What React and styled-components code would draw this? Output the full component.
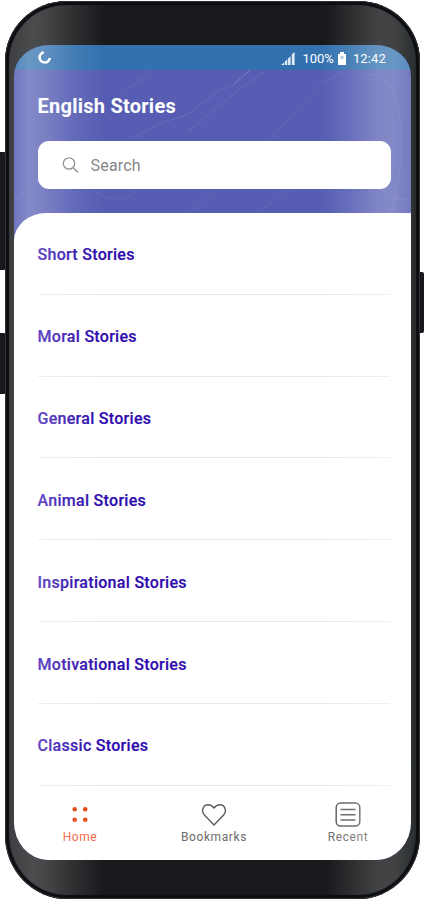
import React from "react";
import styled, { createGlobalStyle } from "styled-components";

const GlobalStyle = createGlobalStyle`
  * {
    box-sizing: border-box;
  }
  body {
    margin: 0;
    background: #fff;
    font-family: Roboto, sans-serif;
    overflow: hidden;
  }
`;

const Page = styled.div`
  position: relative;
  width: 424px;
  height: 900px;
  padding: 1px 4px 1px 5px;
`;

const SideButton = styled.div`
  position: absolute;
  top: ${(props) => props.$top}px;
  height: ${(props) => props.$height}px;
  width: 8px;
  ${(props) => (props.$right ? "right: 0;" : "left: -2px;")}
  border-radius: 2px;
  background: #17191d;
`;

const Phone = styled.div`
  position: relative;
  height: 898px;
  padding: 44px 9px 39px 9px;
  border-radius: 62px / 60px 60px 64px 64px;
  background: linear-gradient(
    90deg,
    #3b3d3f 0,
    #4a4c4d 28px,
    #434546 42px,
    #2b2d2f 72px,
    #17191c 100px,
    #17191c 320px,
    #2b2d2f 345px,
    #424445 375px,
    #3f4142 392px,
    #25282a 415px
  );
  box-shadow: inset 0 0 0 1px #303236, inset 0 0 1px 4px #0c0e11;
`;

const Screen = styled.div`
  position: relative;
  display: flex;
  flex-direction: column;
  height: 815px;
  border-radius: 36px 36px 34px 34px / 31px 31px 38px 38px;
  overflow: hidden;
  background: #565db3;
`;

const Gloss = styled.div`
  position: absolute;
  inset: 0;
  pointer-events: none;
  background: linear-gradient(
    90deg,
    rgba(255, 255, 255, 0.16) 0,
    rgba(255, 255, 255, 0.27) 14px,
    rgba(255, 255, 255, 0.23) 28px,
    rgba(255, 255, 255, 0.09) 58px,
    rgba(255, 255, 255, 0) 90px,
    rgba(255, 255, 255, 0) 306px,
    rgba(255, 255, 255, 0.11) 335px,
    rgba(255, 255, 255, 0.25) 364px,
    rgba(255, 255, 255, 0.27) 380px,
    rgba(255, 255, 255, 0.18) 397px
  );
`;

const StatusBar = styled.div`
  display: flex;
  align-items: center;
  justify-content: space-between;
  flex: none;
  height: 25px;
  padding: 2px 25px 0 23px;
  background: #3271ae;
  color: #fff;
  font-size: 13px;
`;

const StatusInfo = styled.div`
  display: flex;
  align-items: center;
  line-height: 15px;

  svg:first-child {
    margin-right: 7px;
  }
`;

const Battery = styled.svg`
  margin-left: 3px;
`;

const Clock = styled.span`
  margin-left: 6px;
  letter-spacing: 0.15px;
`;

const Header = styled.header`
  position: relative;
  flex: none;
  height: 143px;
  padding: 23px 20px 0 23.5px;
`;

const Lines = styled.svg`
  position: absolute;
  inset: 0;
`;

const Title = styled.h1`
  position: relative;
  margin: 0;
  color: #fff;
  font-size: 20px;
  line-height: 26px;
  font-weight: 700;
  letter-spacing: 0.25px;
`;

const SearchBox = styled.div`
  position: relative;
  display: flex;
  align-items: center;
  gap: 12px;
  height: 48px;
  margin-top: 22px;
  padding: 1px 24px 0;
  border-radius: 11px;
  background: #fff;
  color: #858585;
  font-size: 16px;
  letter-spacing: 0.2px;
`;

const List = styled.main`
  flex: 1;
  padding: 0 21px 0 23.5px;
  border-top-left-radius: 32px 28px;
  background: #fff;
`;

const Row = styled.div`
  display: flex;
  align-items: center;
  height: 81.83px;
  padding-top: 3px;
  border-bottom: 1px solid #e9e9e9;
  color: #2e0bae;
  font-size: 16px;
  font-weight: 500;
  letter-spacing: 0.29px;
  -webkit-text-stroke: 0.2px #2e0bae;
`;

const TabBar = styled.nav`
  display: flex;
  flex: none;
  height: 74px;
  background: #fff;
`;

const Tab = styled.div`
  display: flex;
  flex-direction: column;
  align-items: center;
  flex: none;
  width: ${(props) => props.$width || 132}px;
  padding-top: 15px;
  color: ${(props) => (props.$active ? "#f2603f" : "#6c6c6c")};
  font-size: 12px;
  line-height: 16px;
  letter-spacing: 0.6px;

  svg {
    display: block;
    height: 26px;
    margin-bottom: 2px;
  }
`;

const stories = ["Short", "Moral", "General", "Animal", "Inspirational", "Motivational", "Classic"];

const HeaderLines = () => (
  <Lines width="397" height="143" fill="none" stroke="#fff" strokeOpacity="0.1">
    <path d="M137 0C128 9 120 14 108 25M236 0L219 15L203 22L174 44L161 49C144 52 132 61 120 68M252 0L220 24C202 37 190 50 174 61" />
    <path d="M236 0L219 15" strokeOpacity="0.15" />
    <path d="M329 3L310 11L286 36L260 65L236 96M350 3C369 6 380 14 383 34C388 58 391 91 377 144" strokeOpacity="0.08" />
    <path d="M82 122C99 133 118 130 123 119M0 130L17 117M175 143L199 122M243 143L276 119M360 115L381 129H397" strokeOpacity="0.08" />
  </Lines>
);

const App = () => {
  return (
    <>
      <GlobalStyle />
      <Page>
        <SideButton $top={152} $height={118} />
        <SideButton $top={333} $height={61} />
        <SideButton $top={272} $height={61} $right />
        <Phone>
          <Screen>
            <StatusBar>
              <svg width="15" height="15" viewBox="0 0 15 15" fill="none" stroke="#fff" strokeWidth="2.6">
                <path d="M6.8 1.4A5.1 5.1 0 1 0 12.8 7" />
              </svg>
              <StatusInfo>
                <svg width="14" height="13" viewBox="0 0 14 13" fill="#fff">
                  <path d="M0 13L3 10.4V13ZM3.7 9.8L6.3 7.3V13H3.7ZM7 6.6L9.6 4.2V13H7ZM10.8 2.2L13.6 0V13H10.8Z" fillOpacity="0.85" />
                </svg>
                <span>100%</span>
                <Battery width="10" height="14" viewBox="0 0 10 14" fill="#fff">
                  <path d="M3 0H7V2H9V13H1V2H3Z" />
                  <path d="M3.5 4H6.5V7H3.5Z" fill="#b4cde2" />
                </Battery>
                <Clock>12:42</Clock>
              </StatusInfo>
            </StatusBar>
            <Header>
              <HeaderLines />
              <Title>English Stories</Title>
              <SearchBox>
                <svg width="17" height="17" viewBox="0 0 17 17" fill="none" stroke="#858585" strokeWidth="1.3">
                  <circle cx="7" cy="6.5" r="5.7" />
                  <path d="M11.2 10.7L16 15.5" />
                </svg>
                Search
              </SearchBox>
            </Header>
            <List>
              {stories.map((name) => (
                <Row key={name}>{name} Stories</Row>
              ))}
            </List>
            <TabBar>
              <Tab $active>
                <svg width="20" viewBox="0 0 20 26" fill="#e4430f">
                  <circle cx="4.7" cy="8.2" r="2.3" />
                  <circle cx="15.2" cy="8.2" r="2.3" />
                  <circle cx="4.7" cy="18.7" r="2.3" />
                  <circle cx="15.2" cy="18.7" r="2.3" />
                </svg>
                Home
              </Tab>
              <Tab $width={136}>
                <svg width="26" viewBox="0 0 26 26" fill="none" stroke="#5c5c5c" strokeWidth="1.4">
                  <path d="M13 24L3.4 14C-.3 10 2.2 3.8 7 3.8C9.8 3.8 11.8 5.2 13 7C14.2 5.2 16.2 3.8 19 3.8C23.8 3.8 26.3 10 22.6 14Z" strokeLinejoin="round" />
                </svg>
                Bookmarks
              </Tab>
              <Tab>
                <svg width="26" viewBox="0 0 26 26" fill="none" stroke="#5c5c5c" strokeWidth="1.5">
                  <rect x="1.2" y="1.9" width="23.6" height="23.2" rx="4.5" />
                  <path d="M5.5 8.5H20.5M5.5 13.7H20.5M5.5 18.9H20.5" />
                </svg>
                Recent
              </Tab>
            </TabBar>
            <Gloss />
          </Screen>
        </Phone>
      </Page>
    </>
  );
};

export default App;
